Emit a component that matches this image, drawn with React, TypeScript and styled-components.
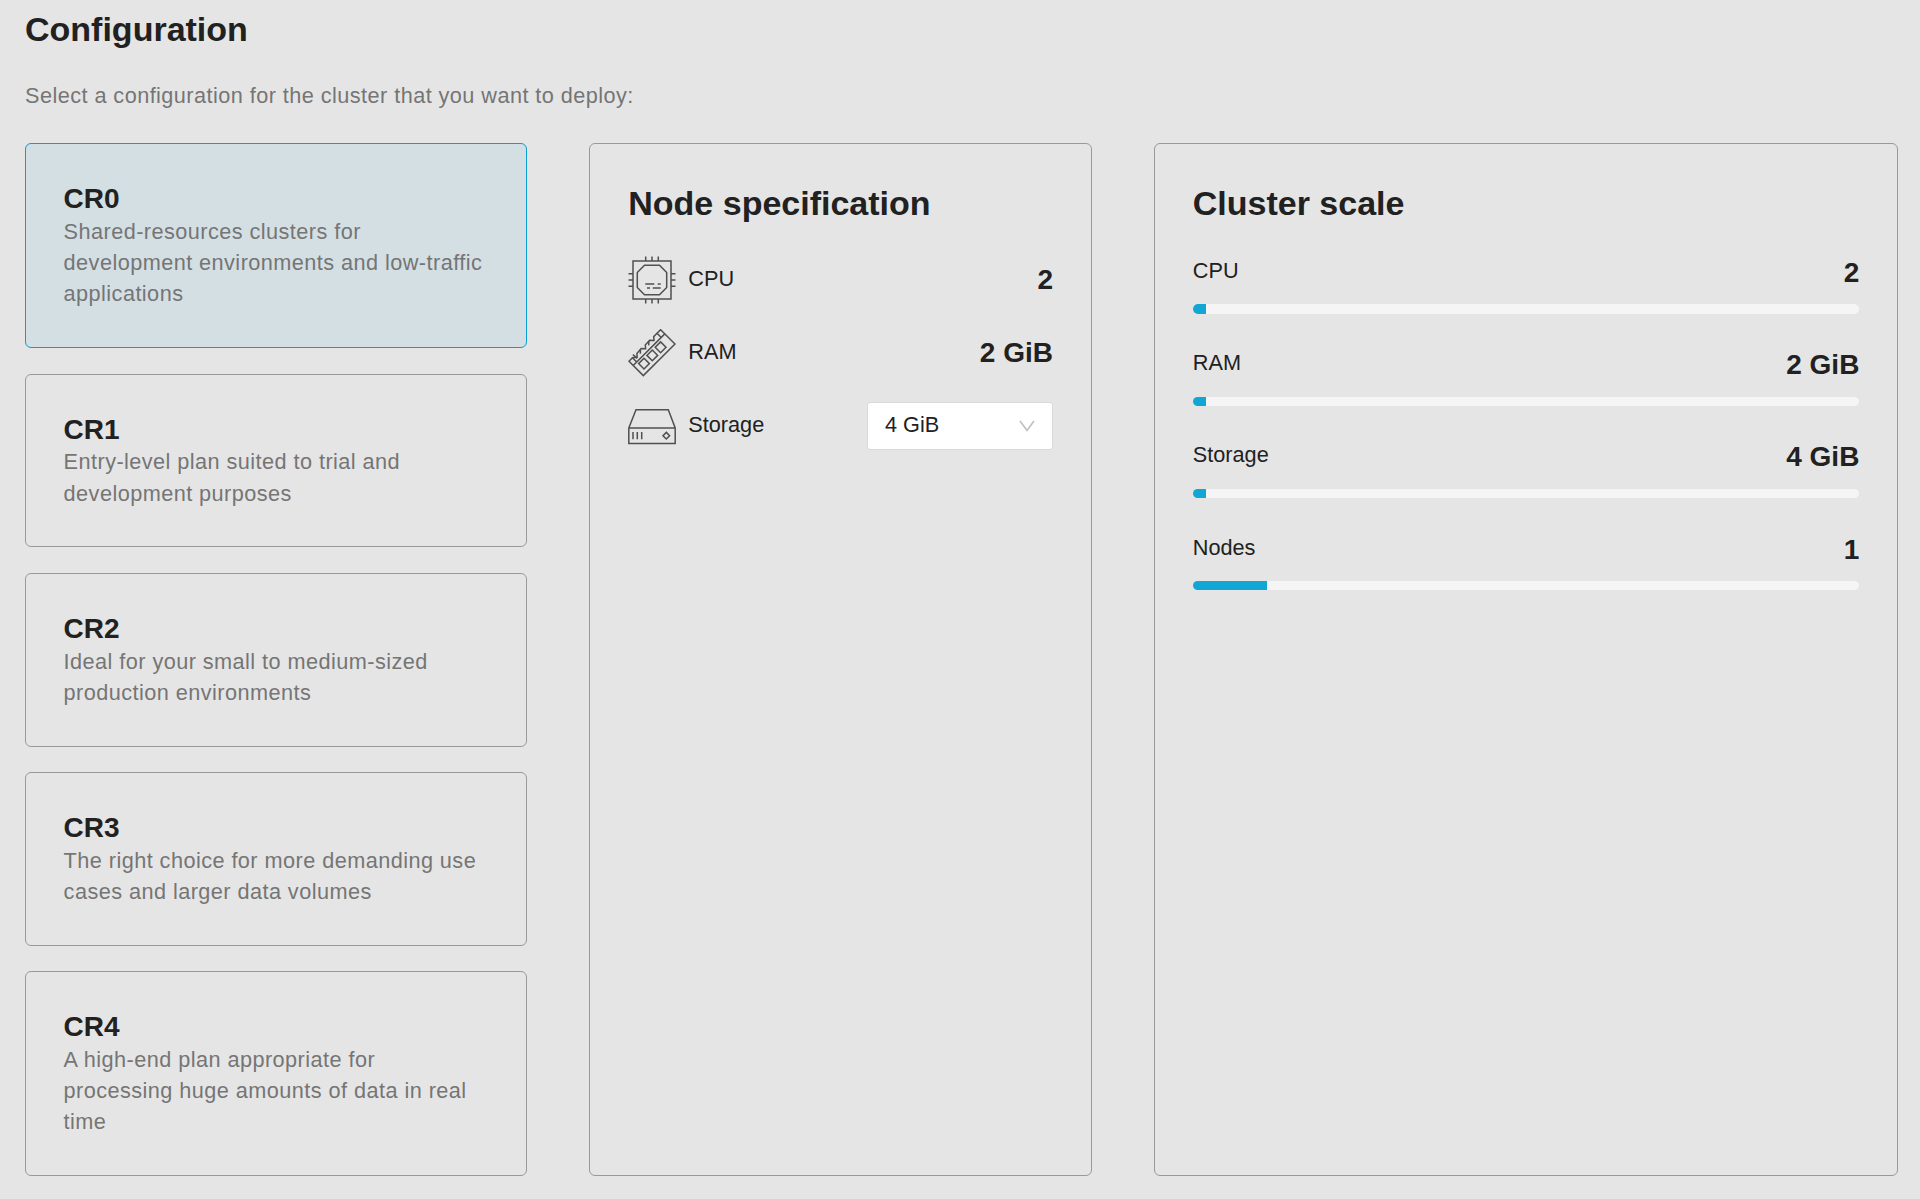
import React, { useState } from "react";
import styled, { createGlobalStyle } from "styled-components";

const color = {
  page: "#e5e5e5",
  text: "#212121",
  muted: "#757575",
  border: "#999999",
  accent: "#11a6d4",
  accentBorder: "#0a9fd2",
  selected: "#d4dfe4",
  track: "#f5f5f5",
  icon: "#505050",
};

const GlobalStyle = createGlobalStyle`
  *, *::before, *::after { box-sizing: border-box; }
  body {
    margin: 0;
    background: ${color.page};
    color: ${color.text};
    font-family: "Liberation Sans", Arial, Helvetica, sans-serif;
    font-size: 21.7px;
    line-height: 31.1px;
  }
`;

const Page = styled.main`
  display: flex;
  flex-direction: column;
  width: 1920px;
  height: 1199px;
  padding: 9px 22px 0 25px;
  overflow: hidden;
`;

const Heading = styled.h2`
  margin: 0;
  font-size: 34px;
  font-weight: 700;
  line-height: 40.2px;
`;

const Intro = styled.p`
  margin: 31px 0 32px;
  color: ${color.muted};
  letter-spacing: 0.44px;
`;

const Columns = styled.div`
  display: grid;
  grid-template-columns: 502.3px 502.3px 744.2px;
  column-gap: 62.2px;
`;

const PlanList = styled.div`
  display: flex;
  flex-direction: column;
  gap: 25.3px;
`;

const Plan = styled.button<{ $selected: boolean }>`
  display: block;
  width: 100%;
  margin: 0;
  padding: 38.2px 37.6px 37.8px;
  border: 1px solid ${(p) => (p.$selected ? color.accentBorder : color.border)};
  border-radius: 6px;
  background: ${(p) => (p.$selected ? color.selected : "transparent")};
  color: inherit;
  font: inherit;
  text-align: left;
  cursor: pointer;
`;

const PlanName = styled.div`
  font-size: 28px;
  font-weight: 700;
  line-height: 33.7px;
`;

const PlanText = styled.div`
  color: ${color.muted};
  letter-spacing: 0.44px;
`;

const Panel = styled.section`
  padding: 38.8px 37.8px;
  border: 1px solid ${color.border};
  border-radius: 6px;
`;

const SpecList = styled.div`
  display: flex;
  flex-direction: column;
  gap: 24.6px;
  margin-top: 32.1px;
`;

const SpecRow = styled.div`
  display: flex;
  align-items: center;
  height: 48.5px;
`;

const SpecIcon = styled.svg`
  flex: none;
  width: 48px;
  height: 48px;
  margin-right: 12px;
  fill: none;
  stroke: ${color.icon};
  stroke-width: 1.5;
`;

const SpecLabel = styled.span`
  flex: 1;
  padding-bottom: 2px;
`;

const Value = styled.span`
  font-size: 28px;
  font-weight: 700;
  line-height: 34px;
`;

const Select = styled.div`
  display: flex;
  align-items: center;
  justify-content: space-between;
  width: 185.8px;
  height: 48.5px;
  padding: 0 17px 2px 16.8px;
  border: 1px solid #d9d9d9;
  border-radius: 3px;
  background: #ffffff;
`;

const Chevron = styled.svg`
  width: 16px;
  height: 12px;
  margin-top: 2px;
  fill: none;
  stroke: #bfbfbf;
  stroke-width: 1.6;
`;

const ScaleList = styled.div`
  display: flex;
  flex-direction: column;
  gap: 34.5px;
  margin-top: 32.5px;
`;

const ScaleHead = styled.div`
  display: flex;
  align-items: flex-start;
  justify-content: space-between;
  height: 34px;
  margin-bottom: 14.5px;
`;

const ScaleLabel = styled.span`
  line-height: 30.4px;
`;

const Track = styled.div`
  height: 9.3px;
  border-radius: 5px;
  background: ${color.track};
  overflow: hidden;
`;

const Fill = styled.div`
  height: 100%;
  background: ${color.accent};
`;

const CpuIcon = () => (
  <SpecIcon viewBox="0 0 48 48">
    <path d="M5 5H43V43H5Z" />
    <path d="M16.5 9.3H31.5L38.7 16.5V31.5L31.5 38.7H16.5L9.3 31.5V16.5Z" />
    <path d="M17.7 0.5V5M24 0.5V5M30.3 0.5V5M17.7 43V47.5M24 43V47.5M30.3 43V47.5" />
    <path d="M0.5 17.7H5M0.5 24H5M0.5 30.3H5M43 17.7H47.5M43 24H47.5M43 30.3H47.5" />
    <path d="M17.3 28H26.3M29.7 28H32.7M19 32H22M24.7 32H32.7" />
  </SpecIcon>
);

const RamIcon = () => (
  <SpecIcon viewBox="0 0 48 48">
    <path d="M1 32.3L15.3 46.6L47 15L32.6 0.7L29 4.3L25.7 7.6L26 11.4L21.6 11.2L17.3 16L17.6 19.8L13.2 19.6L8.9 24.4L9.2 28.2L4.5 28.8Z" />
    <path d="M5.2 36.5L36.8 4.9M4.5 28.8L8.8 33.1M29 4.3L33 8.3" />
    <path d="M4.9 25.6L9.2 29.4M12.5 20.4L12.3 24.8M20.9 12L20.7 16.4" />
    <path d="M16 29.2L21.4 34.6L16 40L10.6 34.6ZM24.3 21L29.7 26.4L24.3 31.8L18.9 26.4ZM32.6 12.9L38 18.3L32.6 23.7L27.2 18.3Z" />
  </SpecIcon>
);

const StorageIcon = () => (
  <SpecIcon viewBox="0 0 48 48">
    <path d="M0.8 26L8 7.8H40.3L47.2 26V41.5H0.8ZM0.8 26H47.2" />
    <path d="M5 30V37.3M9.3 30V37.3M13.7 30V37.3" />
    <path d="M38.3 30.4L41.6 33.7L38.3 37L35 33.7Z" />
  </SpecIcon>
);

const plans = [
  { name: "CR0", text: "Shared-resources clusters for development environments and low-traffic applications" },
  { name: "CR1", text: "Entry-level plan suited to trial and development purposes" },
  { name: "CR2", text: "Ideal for your small to medium-sized production environments" },
  { name: "CR3", text: "The right choice for more demanding use cases and larger data volumes" },
  { name: "CR4", text: "A high-end plan appropriate for processing huge amounts of data in real time" },
];

const scale = [
  { label: "CPU", value: "2", percent: 2 },
  { label: "RAM", value: "2 GiB", percent: 2 },
  { label: "Storage", value: "4 GiB", percent: 2 },
  { label: "Nodes", value: "1", percent: 11.15 },
];

export default function App() {
  const [selected, setSelected] = useState("CR0");

  return (
    <>
      <GlobalStyle />
      <Page>
        <Heading>Configuration</Heading>
        <Intro>Select a configuration for the cluster that you want to deploy:</Intro>
        <Columns>
          <PlanList>
            {plans.map((plan) => (
              <Plan
                key={plan.name}
                $selected={plan.name === selected}
                onClick={() => setSelected(plan.name)}
              >
                <PlanName>{plan.name}</PlanName>
                <PlanText>{plan.text}</PlanText>
              </Plan>
            ))}
          </PlanList>

          <Panel>
            <Heading>Node specification</Heading>
            <SpecList>
              <SpecRow>
                <CpuIcon />
                <SpecLabel>CPU</SpecLabel>
                <Value>2</Value>
              </SpecRow>
              <SpecRow>
                <RamIcon />
                <SpecLabel>RAM</SpecLabel>
                <Value>2 GiB</Value>
              </SpecRow>
              <SpecRow>
                <StorageIcon />
                <SpecLabel>Storage</SpecLabel>
                <Select>
                  <span>4 GiB</span>
                  <Chevron viewBox="0 0 16 12">
                    <path d="M1 1L8 10.5L15 1" />
                  </Chevron>
                </Select>
              </SpecRow>
            </SpecList>
          </Panel>

          <Panel>
            <Heading>Cluster scale</Heading>
            <ScaleList>
              {scale.map((item) => (
                <div key={item.label}>
                  <ScaleHead>
                    <ScaleLabel>{item.label}</ScaleLabel>
                    <Value>{item.value}</Value>
                  </ScaleHead>
                  <Track>
                    <Fill style={{ width: `${item.percent}%` }} />
                  </Track>
                </div>
              ))}
            </ScaleList>
          </Panel>
        </Columns>
      </Page>
    </>
  );
}
